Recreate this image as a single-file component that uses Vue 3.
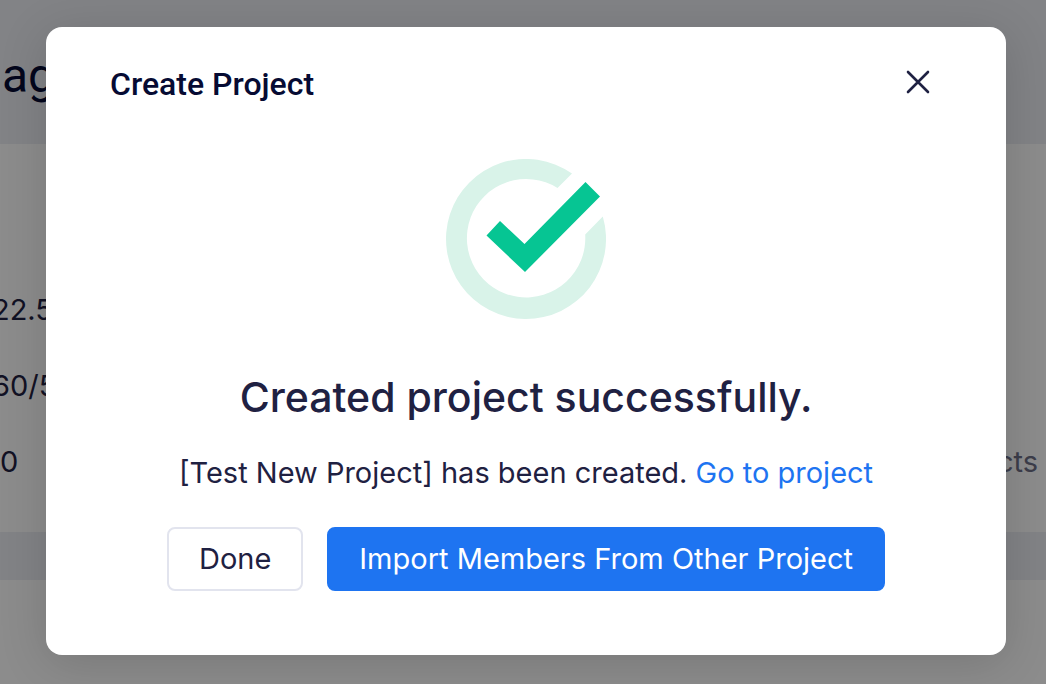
<script setup>
const stats = [
  { value: '22.5', note: '' },
  { value: '60/5', note: '' },
  { value: '0', note: 'projects' },
]
</script>

<template>
  <div class="screen">
    <main class="page" aria-hidden="true">
      <header class="banner"><span class="banner-title">ag</span></header>
      <section class="stats">
        <div v-for="s in stats" :key="s.value" class="stat">
          <span class="value" :class="{ clipped: s.value.length > 1 }">{{ s.value }}</span>
          <span class="note">{{ s.note }}</span>
        </div>
      </section>
      <div class="divider"></div>
    </main>

    <div class="overlay">
      <section class="dialog" role="dialog" aria-modal="true" aria-labelledby="dialog-title">
        <header class="dialog-head">
          <h1 id="dialog-title">Create Project</h1>
          <button class="close" type="button" aria-label="Close">
            <svg width="24" height="24" viewBox="0 0 24 24" fill="none">
              <path d="M2 2 22 22M22 2 2 22" stroke="#1f2142" stroke-width="2.6" stroke-linecap="round" />
            </svg>
          </button>
        </header>
        <svg class="success" width="160" height="160" viewBox="0 0 160 160" aria-hidden="true">
          <path
            d="M126 14.5A80 80 0 1 0 156.800 57.500L139.200 75.500A59.200 59.200 0 1 1 111.500 29Z"
            fill="#d9f3e9"
          />
          <path d="M40.500 76.500 54 62 78.500 85 139.500 23 154 37.500 79 113Z" fill="#06c593" />
        </svg>
        <h2>Created project successfully.</h2>
        <p class="message">[Test New Project] has been created. <a href="#project">Go to project</a></p>
        <div class="actions">
          <button class="btn" type="button">Done</button>
          <button class="btn primary" type="button">Import Members From Other Project</button>
        </div>
      </section>
    </div>
  </div>
</template>

<style>
body {
  margin: 0;
}
</style>

<style scoped>
.screen {
  position: relative;
  min-height: 100vh;
  overflow: hidden;
  background: #fff;
  color: #1f2142;
  font-family: Inter, "Noto Sans", sans-serif;
  font-size: 29px;
  font-weight: 400;
  line-height: 40px;
}
.banner {
  display: flex;
  align-items: center;
  box-sizing: border-box;
  height: 144px;
  padding: 8px 2px 0;
  background: #edeef4;
}
.banner-title {
  color: #060b33;
  font-family: Roboto, sans-serif;
  font-size: 48px;
}
.stats {
  display: grid;
  gap: 36px;
  padding: 146px 8px 50px 0;
}
.stat {
  display: flex;
  justify-content: space-between;
}
.value.clipped {
  margin-left: -8px;
}
.note {
  color: #6e7088;
}
.divider {
  height: 48px;
  background: #edeef4;
}
.overlay {
  position: absolute;
  inset: 0;
  display: flex;
  align-items: flex-start;
  padding: 27px 40px 29px 46px;
  background: rgba(0, 0, 0, 0.45);
}
.dialog {
  box-sizing: border-box;
  width: 100%;
  padding: 36px 64px 64px;
  border-radius: 16px;
  background: #fff;
  box-shadow: 0 8px 48px rgba(0, 0, 0, 0.15);
  text-align: center;
}
.dialog-head {
  display: flex;
  align-items: center;
  justify-content: space-between;
  height: 40px;
}
h1 {
  margin: 0;
  padding-top: 2px;
  color: #060b33;
  font-family: Roboto, sans-serif;
  font-size: 32px;
  font-weight: 500;
}
.close {
  display: flex;
  padding: 11px 12px 13px;
  border: 0;
  background: none;
  cursor: pointer;
}
.success {
  display: block;
  margin: 56px auto 48px;
}
h2 {
  margin: 0;
  font-size: 41px;
  font-weight: 500;
  line-height: 60px;
}
.message {
  margin: 26px 0 34px;
}
a {
  color: #1e74f1;
  text-decoration: none;
}
.actions {
  display: flex;
  justify-content: center;
  gap: 24px;
}
.btn {
  box-sizing: border-box;
  height: 64px;
  padding: 0 30px;
  border: 2px solid #e2e4ee;
  border-radius: 8px;
  background: #fff;
  color: inherit;
  font: inherit;
  white-space: nowrap;
  cursor: pointer;
}
.primary {
  border-color: #1e74f1;
  background: #1e74f1;
  color: #fff;
}
</style>
